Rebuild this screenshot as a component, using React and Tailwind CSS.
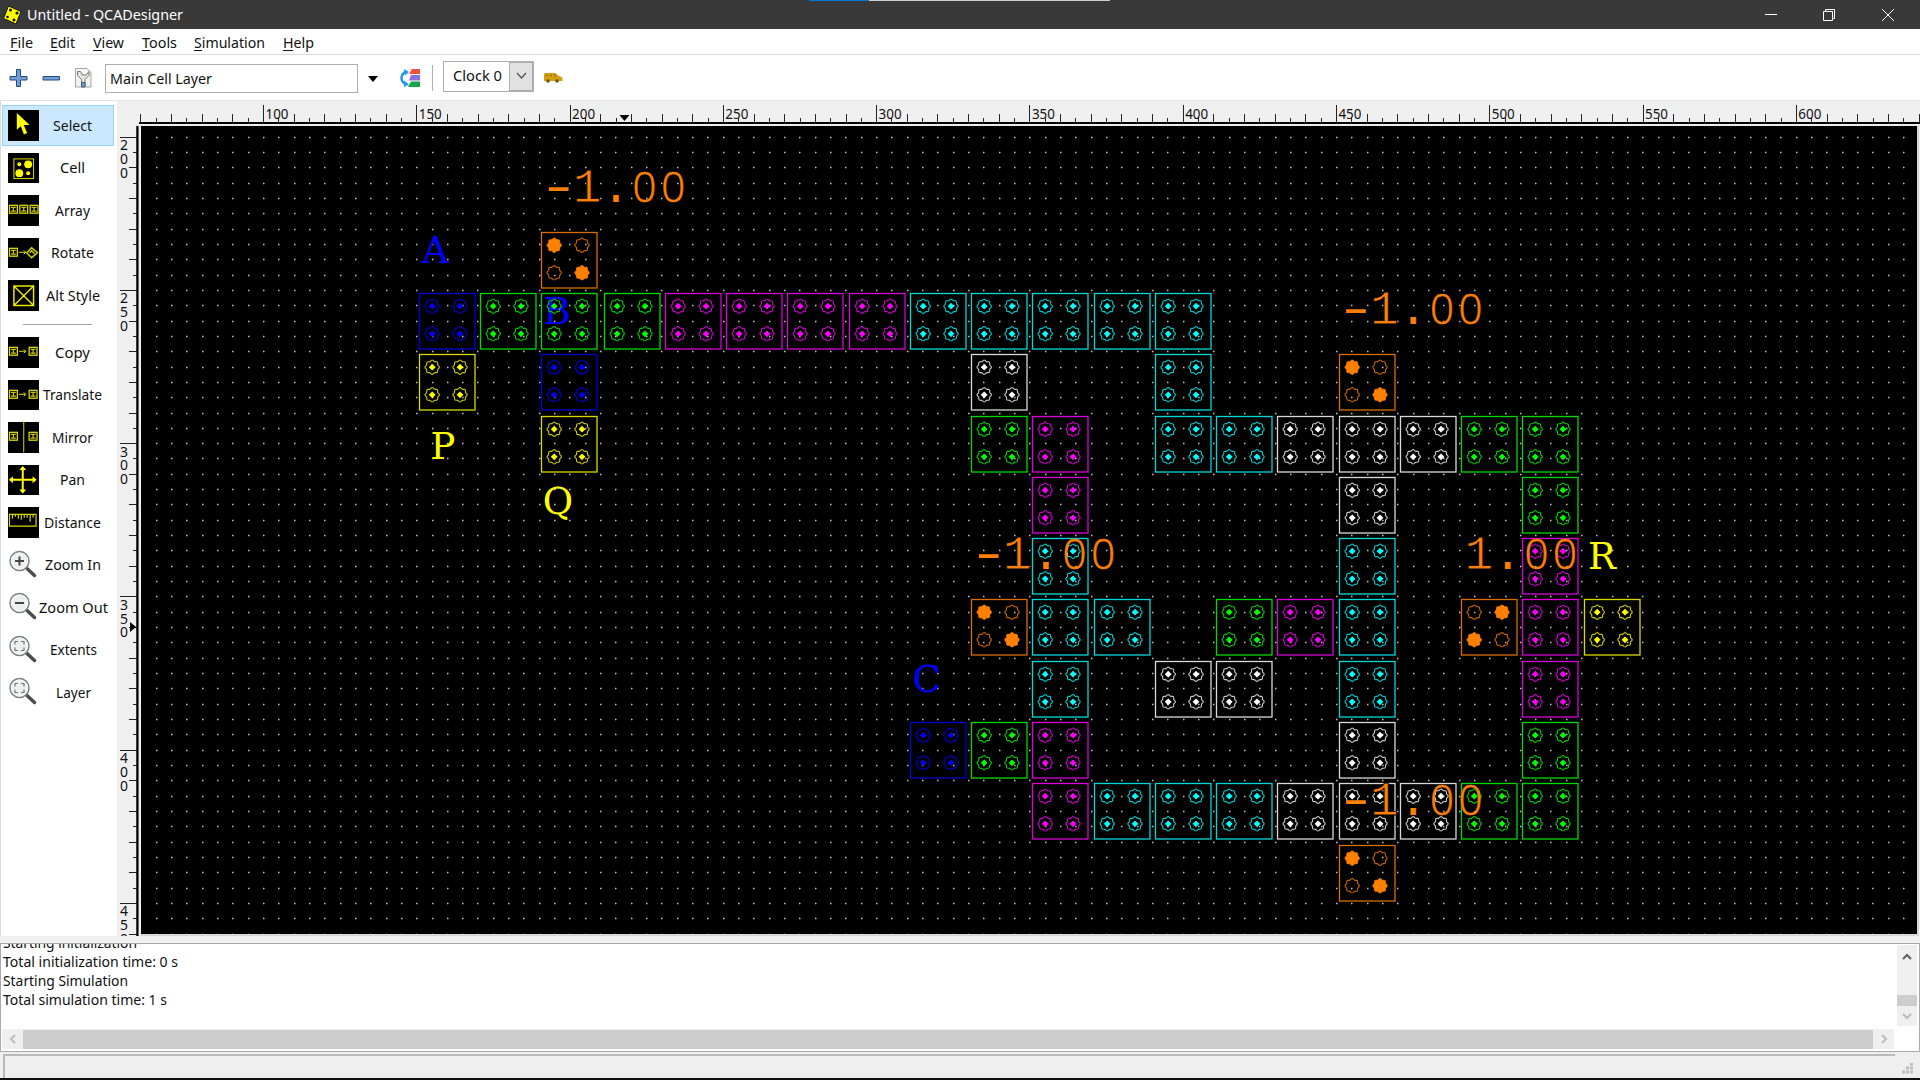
const PX = 15.3285;
const COLORS = { b: '#0000ff', g: '#00ff00', m: '#ff00ff', c: '#00ffff', w: '#ffffff', y: '#ffff00', o: '#ff8000' };
const COL_X = [419, 480, 541, 604, 665, 726, 787, 849, 910, 971, 1032, 1094, 1155, 1216, 1277, 1339, 1400, 1461, 1522, 1584];
const ROWS = [
  [-1, 'o2'],
  [0, 'b0 g1 g2 g3 m4 m5 m6 m7 c8 c9 c10 c11 c12'],
  [1, 'y0 b2 w9 c12 o15'],
  [2, 'y2 g9 m10 c12 c13 w14 w15 w16 g17 g18'],
  [3, 'm10 w15 g18'],
  [4, 'c10 c15 m18'],
  [5, 'o9 c10 c11 g13 m14 c15 r17 m18 y19'],
  [6, 'c10 w12 w13 c15 m18'],
  [7, 'b8 g9 m10 w15 g18'],
  [8, 'm10 c11 c12 c13 w14 w15 w16 g17 g18'],
  [9, 'o15'],
];
const CELLS = ROWS.flatMap(([row, list]) => list.split(' ').map((s) => ({ row, kind: s[0], col: Number(s.slice(1)) })));
const DOTS = [[13.2, 13.2], [41, 13.2], [13.2, 40.8], [41, 40.8]];

/* Scalloped ring around a quantum dot. */
const RING = `M${Array.from({ length: 48 }, (_, i) => {
  const a = (i / 48) * Math.PI * 2;
  const r = 6.6 + 0.6 * Math.cos(8 * a);
  return `${(r * Math.cos(a)).toFixed(2)} ${(r * Math.sin(a)).toFixed(2)}`;
}).join('L')}z`;

function Cell({ row, col, kind }) {
  const x = COL_X[col];
  const y = Math.round(293 + row * 61.29);
  const fixed = kind === 'o' || kind === 'r';
  const color = COLORS[kind === 'r' ? 'o' : kind];
  const filled = kind === 'r' ? [1, 2] : [0, 3];
  return (
    <g transform={`translate(${x} ${y})`} stroke={color} fill="none">
      <rect x="0.5" y="0.5" width="55.500" height="55.500" strokeWidth="1.300" strokeOpacity="0.85" />
      {DOTS.map(([cx, cy], i) => (
        <g key={i} transform={`translate(${cx} ${cy})`}>
          <path d={RING} strokeWidth="1.100" strokeOpacity="0.8" fill={fixed && filled.includes(i) ? color : 'none'} />
          {!fixed && <path d="M0 -3.400l3.400 3.400l-3.400 3.400l-3.400 -3.400z" fill={color} stroke="none" />}
        </g>
      ))}
    </g>
  );
}

function Value({ x, y, positive }) {
  return (
    <g fill="#ff8000" fontSize="48" fontFamily="'Liberation Mono', monospace">
      {!positive && <text x={x - 50} y={y} textLength="43" lengthAdjust="spacingAndGlyphs">-</text>}
      <text y={y} textAnchor="middle">
        <tspan x={x} stroke="#000" strokeWidth="0.900">1</tspan>
        <tspan x={x + 28.7}>.</tspan>
        <tspan x={`${x + 57.4} ${x + 86}`} fontFamily="'Open Sans', sans-serif" fontWeight="300" fontSize="42" stroke="#ff8000" strokeWidth="0.600">00</tspan>
      </text>
    </g>
  );
}

function Letter({ x, y, color, children }) {
  return <text x={x} y={y} textAnchor="middle" fill={color} fontSize="37" fontFamily="'DejaVu Serif', serif">{children}</text>;
}

function gridPath() {
  let d = '';
  for (let j = 0; j <= 52; j++) for (let i = 0; i <= 114; i++) d += `M${Math.round(14.6 + i * PX)} ${Math.round(10.6 + j * PX) + 0.5}h1.5`;
  return d;
}

function Canvas() {
  return (
    <svg className="block bg-black" width="1776" height="808" viewBox="0 0 1776 808">
      <path d={gridPath()} stroke="#c4c4c4" strokeWidth="1.300" />
      <g transform="translate(-141 -126)">
        <Letter x={557} y={323.5} color="#0000ff">B</Letter>
        {CELLS.map((c) => <Cell key={`${c.row}-${c.col}`} {...c} />)}
        <Letter x={435.3} y={262.5} color="#0000ff">A</Letter>
        <Letter x={927} y={692} color="#0000ff">C</Letter>
        <Letter x={443} y={459} color="#ffff00">P</Letter>
        <Letter x={558} y={514} color="#ffff00">Q</Letter>
        <Letter x={1602} y={569} color="#ffff00">R</Letter>
        <Value x={587.2} y={201.5} />
        <Value x={1384.5} y={323.7} />
        <Value x={1017.2} y={569} />
        <Value x={1479} y={569} positive />
        <Value x={1384.5} y={815} />
      </g>
    </svg>
  );
}

function HRuler() {
  const ticks = Array.from({ length: 117 }, (_, i) => {
    const x = Math.round(140.4 + i * PX) - 116.5;
    const k = i - 8;
    const top = k % 10 === 0 ? 3 : k % 2 === 0 ? 12 : 16;
    return `M${x} ${top}V21`;
  }).join('');
  return (
    <svg className="block shrink-0 bg-[#efefef]" width="1803" height="24" viewBox="0 0 1803 24" fontFamily="'Noto Sans', sans-serif" fontSize="14.5" fill="#111">
      <path d={ticks} stroke="#222" strokeWidth="1" />
      {Array.from({ length: 11 }, (_, i) => (
        <text key={i} x={148.5 + i * 153.28} y="17" textLength="23" lengthAdjust="spacingAndGlyphs">{100 + i * 50}</text>
      ))}
      <path d="M502.500 13h10l-5 6z" fill="#000" />
      <path d="M22 21h1781" stroke="#000" strokeWidth="2" />
      <path d="M22 23.500h1781" stroke="#e8e8e8" />
    </svg>
  );
}

function VRuler() {
  const ticks = Array.from({ length: 53 }, (_, i) => {
    const y = Math.round(136.6 + i * PX) - 125.5;
    const left = i % 10 === 0 ? 3 : i % 2 === 0 ? 12 : 16;
    return `M${left} ${y}H20`;
  }).join('');
  return (
    <svg className="block shrink-0 bg-[#efefef]" width="24" height="810" viewBox="0 0 24 810" fontFamily="'Noto Sans', sans-serif" fontSize="14.5" fill="#111">
      <path d={ticks} stroke="#222" />
      {[200, 250, 300, 350, 400, 450].flatMap((n, i) =>
        String(n).split('').map((ch, k) => (
          <text key={`${n}${k}`} x="3" y={24 + i * 153.28 + k * 13.8} textLength="8" lengthAdjust="spacingAndGlyphs">{ch}</text>
        )),
      )}
      <path d="M13 496v10l6-5z" fill="#000" />
      <path d="M20.500 0V810" stroke="#000" strokeWidth="2.500" />
      <path d="M22.500 0V810" stroke="#efefef" strokeWidth="1.500" />
    </svg>
  );
}

const MiniCell = ({ x, w = 8 }) => (
  <g>
    <rect x={x + 0.5} y="10.500" width={w} height="8" stroke="#dcdc00" fill="none" strokeWidth="1.300" />
    <path d={`M${x + 2} 12.500h5M${x + 2} 16.500h5M${x + 4.5} 12v5`} stroke="#c8c800" strokeWidth="1.300" />
  </g>
);
const Arrow = () => <path d="M11 14.500h7M16 12.500l2 2-2 2" stroke="#e0e000" fill="none" />;

const DRAWINGS = {
  Select: <path d="M9 3v17l4-3.500 3.200 8.500 3.300-1.700-3.500-8h6z" fill="#ff0" />,
  Cell: (
    <g fill="#ff0">
      <rect x="6" y="6" width="20" height="20" fill="none" stroke="#dddd00" />
      <circle cx="11.500" cy="11.500" r="2" /><circle cx="20.500" cy="11.500" r="4" />
      <circle cx="11.500" cy="20.500" r="4" /><circle cx="20.500" cy="20.500" r="2" />
    </g>
  ),
  Array: <g><MiniCell x={1} /><MiniCell x={11.5} /><MiniCell x={22} /></g>,
  Rotate: <g><MiniCell x={1} /><Arrow /><path d="M19 15l5-5 6 5-6 5zM22 15l2-2 3 3" stroke="#d0d000" fill="none" strokeWidth="1.500" /></g>,
  'Alt Style': <path d="M6 6h20v20H6zL26 26M26 6L6 26" stroke="#e8e800" strokeWidth="1.500" fill="none" />,
  Copy: <g><MiniCell x={1} /><Arrow /><MiniCell x={21} /></g>,
  Translate: <g><MiniCell x={1} /><Arrow /><MiniCell x={21} /></g>,
  Mirror: <g><MiniCell x={1} /><MiniCell x={21} /><path d="M16 0v31" stroke="#d8d800" /></g>,
  Pan: <g fill="#ff0"><path d="M15 2v26M2 15h26" stroke="#ff0" strokeWidth="2" /><path d="M15 1l3.500 4h-7zM15 29l3.500-4h-7zM1 15l4-3.500v7zM29 15l-4-3.500v7z" /></g>,
  Distance: <path d="M1.500 7.500h27v12h-27zM4.500 8v4M7.500 8v2M10.500 8v4M13.500 8v5M16.500 8v3M19.500 8v3M22.500 8v7M25.500 8v3" stroke="#d8d800" strokeWidth="1.200" fill="none" />,
};
const LENS = {
  'Zoom In': <path d="M7 11h9M11.500 6.500v9" stroke="#444" strokeWidth="2" />,
  'Zoom Out': <path d="M7 11h9" stroke="#444" strokeWidth="2" />,
  Extents: <path d="M7 9.500V6.500h3M13 6.500h3v3M16 12.500v3h-3M10 15.500H7v-3" stroke="#777" strokeWidth="1.200" fill="none" />,
};
LENS.Layer = LENS.Extents;

function ToolIcon({ name }) {
  if (DRAWINGS[name]) return <svg className="shrink-0 bg-black" width="30.500" height="30.500" viewBox="0 0 31 31">{DRAWINGS[name]}</svg>;
  return (
    <svg className="shrink-0" width="31" height="31" viewBox="0 0 31 31">
      <path d="M19 18.500l7.500 7" stroke="#4a4f4c" strokeWidth="3.500" strokeLinecap="round" />
      <circle cx="11.500" cy="11" r="9.500" fill="#edf0ee" stroke="#7d817f" strokeWidth="1.500" />
      <circle cx="11.500" cy="11" r="8" fill="none" stroke="#fff" strokeWidth="0.800" />
      {LENS[name]}
    </svg>
  );
}

const WIDTHS = { Select: 39, Cell: 25, Array: 35, Rotate: 43, 'Alt Style': 54, Copy: 35, Translate: 59, Mirror: 41, Pan: 25, Distance: 57, 'Zoom In': 56, 'Zoom Out': 69, Extents: 47, Layer: 35 };

/* Label drawn at a fixed advance width. */
function Label({ children, w, size = 14.5, color = '#111', underline }) {
  return (
    <svg className="block shrink-0 overflow-visible" width={w} height="20" viewBox={`0 0 ${w} 20`}>
      <text x="0" y="15" fontSize={size} fill={color} fontFamily="'Noto Sans', sans-serif" textLength={w} lengthAdjust="spacingAndGlyphs">{children}</text>
      {underline && <path d={`M0 17.500h${underline}`} stroke={color} />}
    </svg>
  );
}

function Tool({ name, selected }) {
  return (
    <div className={`ml-px flex h-[41px] w-[112px] items-center border pl-[5px] pr-[6px] ${selected ? 'border-[#99d1ff] bg-[#cce8ff]' : 'border-transparent'}`}>
      <ToolIcon name={name} />
      <div className="flex min-w-0 flex-1 justify-center overflow-visible"><Label w={WIDTHS[name]}>{name}</Label></div>
    </div>
  );
}

const MENU = [['File', 23, 40, 8], ['Edit', 25, 43, 8], ['View', 31, 49, 9], ['Tools', 35, 52, 8], ['Simulation', 71, 89, 8], ['Help', 31, 31, 10]];

function TitleBar() {
  return (
    <header className="relative flex h-[29px] shrink-0 items-center bg-[#393939] pl-[3px]">
      <svg width="19" height="24" viewBox="0 0 19 24">
        <path d="M5.500 3l12.500 5.500-5 12.500L0.500 15.500z" fill="#ff0" stroke="#111" strokeWidth="1" />
        <g fill="#111"><circle cx="7.500" cy="7" r="1.500" /><circle cx="14" cy="10" r="1.600" /><circle cx="4.500" cy="14" r="1.300" /><circle cx="11" cy="17" r="1.500" /></g>
      </svg>
      <div className="ml-[5px]"><Label w={156} color="#fff">Untitled - QCADesigner</Label></div>
      <div className="absolute left-[809px] top-0 flex h-px w-[301px]"><div className="w-[60px] bg-[#0078d7]" /><div className="flex-1 bg-[#d0d0d0]" /></div>
      <svg className="ml-auto mr-[24px]" width="132" height="16" viewBox="0 0 132 16" fill="none" stroke="#fff" strokeWidth="1">
        <path d="M1 7.500h12M59.500 4.500h9v9h-9zM61.500 4V2.500h9v9h-2M118 2l12 12M130 2l-12 12" />
      </svg>
    </header>
  );
}

function Toolbar() {
  return (
    <div className="flex h-[46px] shrink-0 items-center border-b border-[#e4e4e4] bg-white pl-[9px]">
      <svg width="19" height="20" viewBox="0 0 19 20"><path d="M7.500 1.500h4v7h6.500v3.500h-6.500v6.500h-4V12H1V8.500h6.500z" fill="#729fcf" stroke="#204a87" /></svg>
      <svg className="ml-[14px]" width="19" height="20" viewBox="0 0 19 20"><path d="M1 8.500h16.500v3.500H1z" fill="#729fcf" stroke="#204a87" /></svg>
      <svg className="ml-[13px]" width="19" height="22" viewBox="0 0 19 22">
        <path d="M1.500 1.500H13l4 4v14.500H1.500z" fill="#f4f4f2" stroke="#a4a4a4" />
        <path d="M3.500 4.500v4l4 4v7h3.500v-7l4-4v-4l-3 3.500h-3.500l-2-3.500z" fill="#e4e4e4" stroke="#777" /><path d="M7.500 15.500h3.500v4.500H7.500z" fill="#729fcf" stroke="#346" strokeWidth="0.800" />
      </svg>
      <div className="ml-[12px] mt-[2px] flex h-[29px] w-[253px] items-center border border-[#abadb3] pl-[4px]"><Label w={102}>Main Cell Layer</Label></div>
      <svg className="ml-[10px] mt-[3px]" width="10" height="6" viewBox="0 0 10 6"><path d="M0 0h10L5 6z" fill="#000" /></svg>
      <svg className="ml-[21px]" width="23" height="20" viewBox="0 0 23 20">
        <path d="M13 1h8v5H10z" fill="#f0523c" /><path d="M12 7h9v5.500H10z" fill="#8a70dc" /><path d="M12 13.500h9V19H9z" fill="#16a34a" />
        <path d="M7 4C1 6 1 14 7 16" fill="none" stroke="#2196f3" strokeWidth="2.500" /><path d="M5 1l5 3-4 3.500zM5 12.500l5 4-5 2.500z" fill="#2196f3" />
      </svg>
      <div className="ml-[10px] h-[26px] w-px bg-[#b0b0b0]" />
      <div className="mb-[3px] ml-[10px] flex h-[31px] w-[91px] items-center border border-[#abadb3] pl-[9px]">
        <Label w={49}>Clock 0</Label>
        <div className="ml-auto flex h-full w-[24px] items-center justify-center border border-[#adadad] bg-[#e1e1e1]">
          <svg width="11" height="8" viewBox="0 0 11 8"><path d="M1 1l4.500 5L10 1" fill="none" stroke="#555" strokeWidth="1.300" /></svg>
        </div>
      </div>
      <svg className="ml-[9px]" width="20" height="12" viewBox="0 0 20 12"><path d="M1 2l1-1h10.500l2.500 2.500 4.500 2v3.500H1z" fill="#d0a010" /><path d="M3 3.500h2M7 3.500h2M11 3.500h2" stroke="#9a7608" strokeWidth="1.300" /><circle cx="5" cy="9" r="1.800" fill="#6e5408" /><circle cx="14" cy="9" r="1.800" fill="#6e5408" /></svg>
    </div>
  );
}

function Chevron({ d, color = '#bcbcbc' }) {
  return <svg width="12" height="12" viewBox="0 0 12 12"><path d={d} fill="none" stroke={color} strokeWidth="2" /></svg>;
}

function LogPanel() {
  return (
    <section className="flex h-[109px] shrink-0 border border-[#a8a8b0] bg-white">
      <div className="flex min-w-0 flex-1 flex-col">
        <div className="flex h-[85px] flex-col overflow-hidden pl-[2px]">
          <div className="-mt-[11px] h-[19px] shrink-0"><Label w={134}>Starting initialization</Label></div>
          <div className="h-[19px] shrink-0"><Label w={175}>Total initialization time: 0 s</Label></div>
          <div className="h-[19px] shrink-0"><Label w={125}>Starting Simulation</Label></div>
          <div className="h-[19px] shrink-0"><Label w={164}>Total simulation time: 1 s</Label></div>
        </div>
        <div className="ml-[1px] mr-[3px] flex h-[20px] items-center bg-[#efefef]">
          <div className="flex w-[21px] justify-center"><Chevron d="M8 2L4 6l4 4" /></div>
          <div className="h-[19px] flex-1 bg-[#cdcdcd]" />
          <div className="flex w-[21px] justify-center"><Chevron d="M4 2l4 4-4 4" /></div>
        </div>
      </div>
      <div className="mr-[2px] mt-px flex h-[81px] w-[20px] flex-col items-center bg-[#efefef]">
        <div className="mt-[6px]"><Chevron d="M2 8l4-4 4 4" color="#606060" /></div>
        <div className="mt-[32px] h-[11px] w-full shrink-0 bg-[#cdcdcd]" />
        <div className="mt-[4px]"><Chevron d="M2 4l4 4 4-4" /></div>
      </div>
    </section>
  );
}

export default function App() {
  const names = ['Select', 'Cell', 'Array', 'Rotate', 'Alt Style'];
  const more = ['Copy', 'Translate', 'Mirror', 'Pan', 'Distance', 'Zoom In', 'Zoom Out', 'Extents', 'Layer'];
  return (
    <div className="flex h-[1080px] w-[1920px] flex-col overflow-hidden bg-[#efefef]">
      <TitleBar />
      <nav className="flex h-[26px] shrink-0 items-center border-b border-[#dcdcdc] bg-white pl-[10px] pt-[2px]">
        {MENU.map(([m, w, step, u]) => (
          <div key={m} className="shrink-0" style={{ width: step }}><Label w={w} underline={u}>{m}</Label></div>
        ))}
      </nav>
      <Toolbar />
      <main className="flex h-[835px] shrink-0">
        <aside className="flex w-[117px] shrink-0 flex-col gap-[1.500px] border-l border-[#dcdcdc] bg-white pt-[4px]">
          {names.map((n) => <Tool key={n} name={n} selected={n === 'Select'} />)}
          <div className="ml-[22px] flex h-[13px] w-[69px] items-center"><div className="h-px w-full bg-[#a0a0a0]" /></div>
          {more.map((n) => <Tool key={n} name={n} />)}
        </aside>
        <div className="flex flex-1 flex-col pt-px">
          <HRuler />
          <div className="flex">
            <VRuler />
            <div className="h-[810px] border-b-2 border-r-2 border-[#d8d8d8] bg-black"><Canvas /></div>
          </div>
        </div>
      </main>
      <div className="h-[7px] shrink-0" />
      <LogPanel />
      <footer className="flex flex-1 border-b-2 border-[#101014] pl-[3px] pt-[2px]">
        <div className="w-[1892px] border-l-2 border-t-2 border-[#b9b9b9]" />
        <svg className="ml-[7px] mt-[9px]" width="12" height="12" viewBox="0 0 12 12"><path d="M8 1h3M4 5h3M8 5h3M0 9h3M4 9h3M8 9h3" stroke="#bdbdbd" strokeWidth="3" /></svg>
      </footer>
    </div>
  );
}
